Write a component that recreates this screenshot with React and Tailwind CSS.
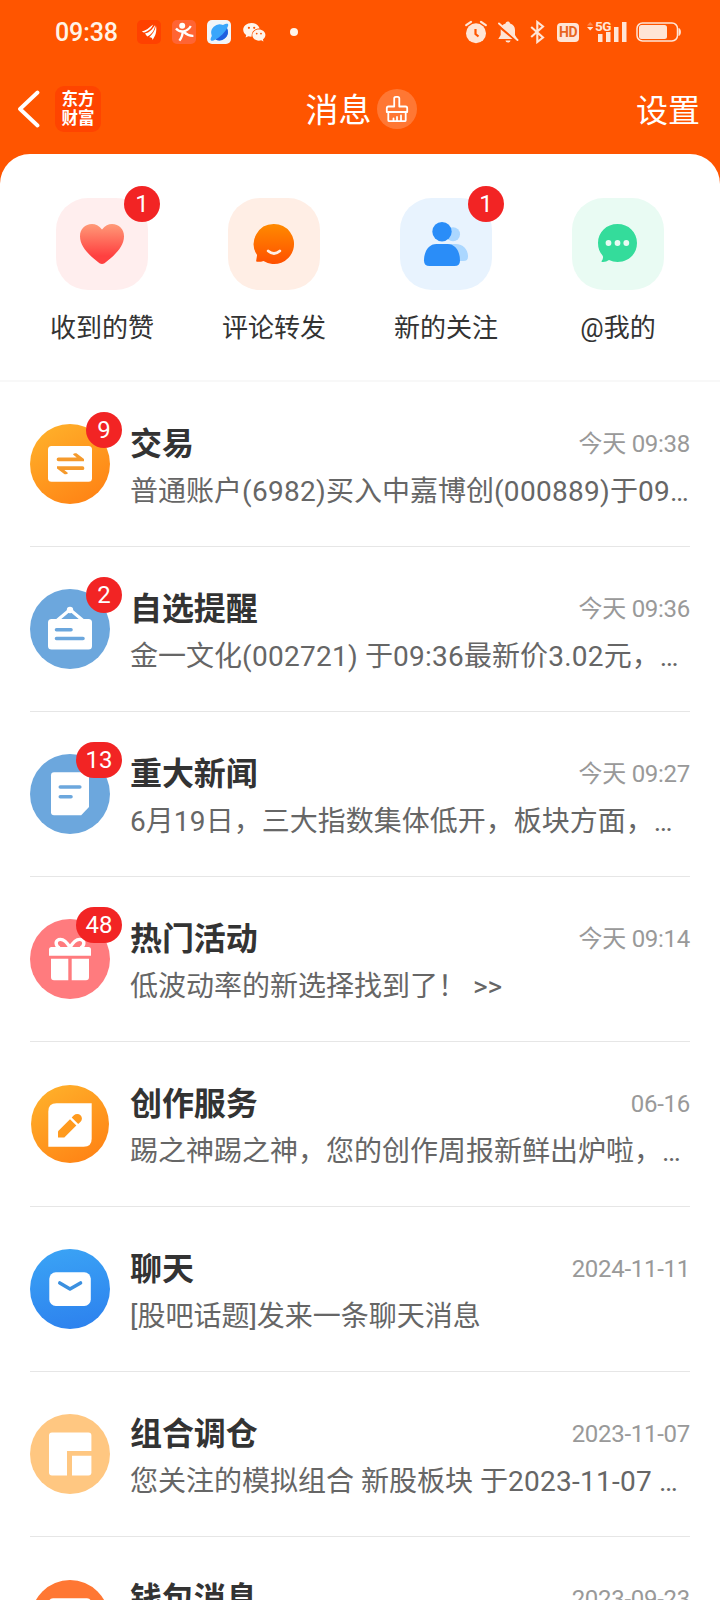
import React from "react";

const fontStack =
  "font-[Roboto,'Noto_Sans_CJK_SC',sans-serif] [font-kerning:none]";

/* ---------- status bar ---------- */

function AppIcons() {
  return (
    <div className="ml-[19px] flex items-center gap-[11px]">
      <svg width="24" height="24" viewBox="0 0 24 24">
        <rect width="24" height="24" rx="5" fill="#ff4100" />
        <path
          d="M4.8 11.4C9 10.6 12 7.6 16.2 4.4 14.6 8.6 10.6 11.8 6.8 12.4zM8 13.6c4.600-1 7.200-4.200 10.200-8.600C17.400 10.800 14.400 14.600 10.200 16.600zM12.200 17.200c3-2.400 5.600-6 6.800-11.400 1 5.200-.4 10.400-3.600 14.200.2-2.200-1-3-3.200-2.800z"
          fill="#fff"
        />
      </svg>
      <svg width="24" height="24" viewBox="0 0 24 24">
        <rect width="24" height="24" rx="5" fill="#ff6433" />
        <circle cx="10.200" cy="5.800" r="3" fill="#fff" />
        <path
          d="M4 8.500c2 2.400 4.600 3.300 7.400 2.900 3.200-.5 5.400-2 7.400-5.400M10.600 11.500c.2 3.200-.8 5.800-3.200 9.200M12 12.200c2.600 2.400 5.400 3.800 9.400 3.600"
          fill="none"
          stroke="#fff"
          strokeWidth="2.300"
        />
      </svg>
      <svg width="24" height="24" viewBox="0 0 24 24">
        <rect width="24" height="24" rx="5" fill="#f2f5f8" />
        <path
          d="M4 20.500c-1-1 0-3 .8-4.500A8.500 8.500 0 0 1 16 5c2-1.200 4.500-1.800 5-1 .6 1-.2 2.800-1 4.200A8.500 8.500 0 0 1 8.500 19.500C6.600 20.700 4.700 21.200 4 20.500z"
          fill="#3aa6fb"
        />
        <path
          d="M20 8.200c-2 4-6.500 8.600-11.500 11.300A8.600 8.600 0 0 0 20.700 10z"
          fill="#1f5fe0"
        />
      </svg>
      <svg width="24" height="24" viewBox="0 0 24 24" fill="#fff5ec">
        <path d="M9.500 3C4.800 3 1.200 6 1.200 9.800c0 2.200 1.200 4.100 3 5.300L3.600 17.600l2.800-1.400c1 .3 2.100.5 3.300.4C9 11.600 13 8.500 17.600 8.600 16.800 5.300 13.500 3 9.500 3z" />
        <circle cx="6.900" cy="7.800" r="1.100" fill="#ff5500" />
        <circle cx="12.200" cy="7.800" r="1.100" fill="#ff5500" />
        <path d="M16.900 9.600c-3.700 0-6.600 2.400-6.600 5.500s2.900 5.600 6.600 5.600c.8 0 1.600-.1 2.300-.4l2.300 1.200-.6-2c1.500-1 2.500-2.600 2.500-4.400 0-3.100-2.900-5.500-6.500-5.500z" />
        <circle cx="14.700" cy="13.600" r=".9" fill="#ff5500" />
        <circle cx="19" cy="13.600" r=".9" fill="#ff5500" />
      </svg>
    </div>
  );
}

function SystemIcons() {
  return (
    <div className="mr-[38px] ml-auto flex items-center text-[#ffe5d6]">
      {/* alarm */}
      <svg width="22" height="24" viewBox="0 0 22 24">
        <circle cx="11" cy="13.300" r="10" fill="currentColor" />
        <path
          d="M1.200 5.200 6 1.800M20.800 5.200 16 1.800"
          stroke="currentColor"
          strokeWidth="2.200"
          strokeLinecap="round"
        />
        <path
          d="M10.500 9v5l3 2.500"
          fill="none"
          stroke="#ff5500"
          strokeWidth="2.200"
        />
      </svg>
      {/* muted bell */}
      <svg className="ml-[10px]" width="22" height="24" viewBox="0 0 22 24">
        <path
          d="M8.500 3.500c.3-1.300 1.200-2 2.300-2s2 .7 2.300 2c3.300 1 4.900 3.500 4.900 6.500v5l2.300 4H1.300l2.400-4v-5c0-3 1.500-5.500 4.800-6.500z"
          fill="currentColor"
        />
        <path d="M8.500 20.500h5a2.500 2 0 0 1-5 0z" fill="currentColor" />
        <path d="M1 5.500 21 22" stroke="#ff5500" strokeWidth="2.400" />
        <path
          d="M2 3.500 20.500 20"
          stroke="currentColor"
          strokeWidth="1.900"
          strokeLinecap="round"
        />
      </svg>
      {/* bluetooth */}
      <svg className="ml-[11px]" width="15" height="24" viewBox="0 0 15 24">
        <path
          d="M1.200 7 13 17.500 7.300 22V2L13 6.500 1.200 17"
          fill="none"
          stroke="currentColor"
          strokeWidth="2.100"
        />
      </svg>
      <div className="ml-[12px] flex h-[19px] w-[22px] items-center justify-center rounded-[4px] bg-[#ffe5d6] font-['Roboto'] text-[14px] leading-none font-bold tracking-[-0.5px] text-[#e8651f]">
        HD
      </div>
      <div className="relative ml-[7px] h-6 w-[42px]">
        <svg width="42" height="24" viewBox="0 0 42 24" fill="currentColor">
          <path d="M1 5.500 4.200 2l3.200 3.500z" opacity=".35" />
          <path d="M1 7h6.400L4.200 10.500z" />
          <rect x="12" y="14" width="4.500" height="8" />
          <rect x="20" y="12" width="4.500" height="10" />
          <rect x="28" y="7" width="4.500" height="15" />
          <rect x="36" y="2" width="4.500" height="20" />
        </svg>
        <span className="absolute top-0 left-[9px] font-['Roboto'] text-[13.500px] leading-[12px] font-bold tracking-[-0.5px]">
          5G
        </span>
      </div>
      {/* battery */}
      <svg className="ml-[8px]" width="46" height="24" viewBox="0 0 46 24">
        <rect
          x="1"
          y="3"
          width="40.500"
          height="18"
          rx="5.500"
          fill="none"
          stroke="currentColor"
          strokeWidth="1.500"
        />
        <rect x="3" y="5" width="28" height="14" rx="2.500" fill="currentColor" />
        <path
          d="M43 8.500c1.800.6 1.800 6.400 0 7z"
          fill="currentColor"
          stroke="currentColor"
        />
      </svg>
    </div>
  );
}

function StatusBar() {
  return (
    <div className="flex h-16 items-center pl-[55px]">
      <span className="w-[63px] pt-px text-[25px] leading-8 font-medium tracking-[-0.1px] text-[#fff3e8]">
        09:38
      </span>
      <AppIcons />
      <span className="ml-6 h-2 w-2 rounded-full bg-[#fff5ec]" />
      <SystemIcons />
    </div>
  );
}

function NavBar() {
  return (
    <div className="grid h-[90px] grid-cols-[1fr_auto_1fr] items-center pr-5 pl-[17px]">
      <div className="flex items-center">
        <svg width="23" height="38" viewBox="0 0 23 38">
          <path
            d="M20.500 2.500 3 19l17.500 16.500"
            fill="none"
            stroke="#fff"
            strokeWidth="3.800"
            strokeLinecap="round"
            strokeLinejoin="round"
          />
        </svg>
        <div className="ml-[15px] flex h-[46px] w-[46px] flex-col items-center justify-center rounded-[9px] bg-[#ff4400] text-[16.500px] leading-[19px] font-bold text-white">
          <span>东方</span>
          <span>财富</span>
        </div>
      </div>
      <div className="flex items-center gap-[5px] pl-[5px]">
        <h1 className="pt-[3px] text-[33px] leading-10 text-white">消息</h1>
        <span className="flex h-10 w-10 items-center justify-center rounded-full bg-[#ff7733]">
          <svg
            width="24"
            height="28"
            viewBox="0 0 24 28"
            fill="none"
            stroke="#fff"
            strokeWidth="1.800"
            strokeLinejoin="round"
            strokeLinecap="round"
          >
            <path d="M9.200 11.500V3.500Q9.200 1.800 10.900 1.800h1.700Q14.300 1.800 14.300 3.500v8h6.200q1.700 0 1.700 1.700V17H1.800v-3.800q0-1.700 1.700-1.700z" />
            <path d="M3.300 17v8.200q0 1 1 1h15.400q1 0 1-1V17M8.500 26v-2.500M12 26v-4M16 26v-5.500" />
          </svg>
        </span>
      </div>
      <span className="justify-self-end pt-[3px] text-[32px] leading-10 text-white">
        设置
      </span>
    </div>
  );
}

/* ---------- shortcuts ---------- */

const HeartIcon = (
  <svg width="92" height="92" viewBox="0 0 92 92">
    <defs>
      <linearGradient id="heart" x1="0" y1="0" x2="0" y2="1">
        <stop offset="0" stopColor="#ff9a78" />
        <stop offset=".8" stopColor="#ff4040" />
      </linearGradient>
    </defs>
    <path
      d="M46 31.500C43 27.500 39.500 26 36 26c-7 0-12 5-12 12.200C24 49 34 58 43.500 65.200q2.500 1.600 5 0C58 58 68 49 68 38.200 68 31 63 26 56 26c-3.500 0-7 1.500-10 5.500z"
      fill="url(#heart)"
    />
  </svg>
);

const CommentIcon = (
  <svg width="92" height="92" viewBox="0 0 92 92">
    <defs>
      <linearGradient id="comment" x1="0" y1="0" x2="0" y2="1">
        <stop offset="0" stopColor="#ff8a00" />
        <stop offset="1" stopColor="#ff5000" />
      </linearGradient>
    </defs>
    <path
      d="M46 26a20 20 0 1 1-10.500 37c-2 .8-4.500 1-6.500.8q-1-.2-.8-1.200l.9-5.500A20 20 0 0 1 46 26z"
      fill="url(#comment)"
    />
    <path
      d="M40.200 53q5.800 5 11.600 0"
      fill="none"
      stroke="#ffeee4"
      strokeWidth="2.800"
      strokeLinecap="round"
    />
  </svg>
);

const FollowIcon = (
  <svg width="92" height="92" viewBox="0 0 92 92">
    <g fill="#abd7ff">
      <circle cx="53" cy="36.300" r="7" />
      <path d="M46 46h10c7 0 12 5.500 12 12.500q0 4.500-4.500 4.500H46z" />
    </g>
    <g fill="#2a8df8">
      <circle cx="42" cy="33.700" r="9.700" />
      <path d="M36.500 46h11C55 46 60 53 60 62.500q0 5.500-5.500 5.500h-25Q24 68 24 62.500C24 53 29 46 36.500 46z" />
    </g>
  </svg>
);

const MentionIcon = (
  <svg width="92" height="92" viewBox="0 0 92 92">
    <path
      d="M45.500 26C56.500 26 65 34 65 45s-8.500 19-19.500 19q-4.500 0-8.500-2-3 2.300-6.800 2-1.200-.3-.4-1.200 1.700-2 1-5C27.500 54.500 26 50 26 45c0-11 8.500-19 19.500-19z"
      fill="#34dc9b"
    />
    <g fill="#e9fbf3">
      <circle cx="36.500" cy="45" r="2.900" />
      <circle cx="45.500" cy="45" r="2.900" />
      <circle cx="54.300" cy="45" r="2.900" />
    </g>
  </svg>
);

const shortcuts = [
  { title: "收到的赞", count: 1, bg: "bg-[#ffeeee]", icon: HeartIcon },
  { title: "评论转发", bg: "bg-[#ffeee5]", icon: CommentIcon },
  { title: "新的关注", count: 1, bg: "bg-[#e8f3fe]", icon: FollowIcon },
  { title: "@我的", bg: "bg-[#e9fbf3]", icon: MentionIcon },
];

function Badge({ count }) {
  return (
    <span className="absolute -top-3 -right-3 flex h-9 min-w-9 items-center justify-center rounded-full bg-[#f22424] px-[9.500px] text-[24px] leading-9 text-white">
      {count}
    </span>
  );
}

function Shortcuts() {
  return (
    <div className="grid h-[228px] grid-cols-4 border-b-2 border-[#f8f8f8] px-4 pt-11">
      {shortcuts.map((s) => (
        <div key={s.title} className="flex flex-col items-center">
          <div className={`relative h-[92px] w-[92px] rounded-[32px] ${s.bg}`}>
            {s.icon}
            {s.count && <Badge count={s.count} />}
          </div>
          <span className="mt-5 text-[26px] leading-9 text-[#333]">
            {s.title}
          </span>
        </div>
      ))}
    </div>
  );
}

/* ---------- message list ---------- */

const TradeIcon = (
  <svg width="80" height="80" viewBox="0 0 80 80">
    <defs>
      <linearGradient id="orange" x1="0.200" y1="0" x2="0.800" y2="1">
        <stop offset="0" stopColor="#ffb02a" />
        <stop offset="1" stopColor="#ff8214" />
      </linearGradient>
    </defs>
    <circle cx="40" cy="40" r="40" fill="url(#orange)" />
    <rect x="18" y="22" width="44" height="35.700" rx="3.500" fill="#fff" />
    <path
      d="M28.500 33.500h18.200L43 30.600q.8-1.800 3.400-1.300L54 35v2.200H28.500a1.850 1.850 0 0 1 0-3.700zM52.500 46H34.300l3.700 2.900q-.8 1.800-3.400 1.300L27 44.500v-2.200h25.500a1.850 1.850 0 0 1 0 3.700z"
      fill="#f59a2c"
    />
  </svg>
);

const AlertIcon = (
  <svg width="80" height="80" viewBox="0 0 80 80">
    <circle cx="40" cy="40" r="40" fill="#6ca7dd" />
    <path
      d="M27 31.500 40 20.500l13 11"
      fill="none"
      stroke="#fff"
      strokeWidth="3.200"
    />
    <circle cx="40" cy="21" r="3.200" fill="#fff" />
    <rect x="18" y="30" width="44" height="30.500" rx="3.500" fill="#fff" />
    <path
      d="M26.500 40.700h14.500M26.500 49.500h26.500"
      stroke="#6ca7dd"
      strokeWidth="3.600"
      strokeLinecap="round"
    />
  </svg>
);

const NewsIcon = (
  <svg width="80" height="80" viewBox="0 0 80 80">
    <circle cx="40" cy="40" r="40" fill="#6ca7dd" />
    <path
      d="M24 18.300h32q3 0 3 3V53l-7.800 8.300H24q-3 0-3-3v-37q0-3 3-3z"
      fill="#fff"
    />
    <path
      d="M30.300 33h19.500M30.300 42.700H41"
      stroke="#6ca7dd"
      strokeWidth="3.600"
      strokeLinecap="round"
    />
  </svg>
);

const GiftIcon = (
  <svg width="80" height="80" viewBox="0 0 80 80">
    <circle cx="40" cy="40" r="40" fill="#ff7b7e" />
    <path
      d="M40 28.500C36.500 22.500 32 19.500 28.500 20.700c-3.500 1.500-3 6.300 1 8.300M40 28.500C43.500 22.500 48 19.500 51.500 20.700c3.500 1.500 3 6.300-1 8.300"
      fill="none"
      stroke="#fff"
      strokeWidth="3.400"
    />
    <path
      d="M21.500 28h37q2.500 0 2.500 2.500v6.200H19v-6.200q0-2.500 2.500-2.500z"
      fill="#fff"
    />
    <path
      d="M21 39.700h17.300v21.600H24q-3 0-3-3zM41.700 39.700H59v18.600q0 3-3 3H41.700z"
      fill="#fff"
    />
  </svg>
);

const CreateIcon = (
  <svg width="80" height="80" viewBox="0 0 80 80">
    <circle cx="40" cy="40" r="39" fill="url(#orange)" />
    <path
      d="M26.500 19.300h35.200v35.400q0 8-8 8H18.300V27.500q0-8.200 8.200-8.200z"
      fill="#fff"
    />
    <path d="M28 47.200 40 35.200l6.300 6.200-12 12H28z" fill="#ff9a1e" />
    <path
      d="m41.700 33.500 2.200-2.200a4.600 4.600 0 0 1 6.700 6.500L48.200 40z"
      fill="#ff9a1e"
    />
  </svg>
);

const ChatIcon = (
  <svg width="80" height="80" viewBox="0 0 80 80">
    <defs>
      <linearGradient id="blue" x1="0.400" y1="0" x2="0.600" y2="1">
        <stop offset="0" stopColor="#3aa2f5" />
        <stop offset="1" stopColor="#2d82ee" />
      </linearGradient>
    </defs>
    <circle cx="40" cy="40" r="40" fill="url(#blue)" />
    <rect x="19.300" y="23.300" width="41.500" height="33.700" rx="6.500" fill="#fff" />
    <path
      d="m29.800 34 10.200 6 10.500-6"
      fill="none"
      stroke="#3b90e0"
      strokeWidth="3.600"
      strokeLinecap="round"
      strokeLinejoin="round"
    />
  </svg>
);

const PortfolioIcon = (
  <svg width="80" height="80" viewBox="0 0 80 80">
    <circle cx="40" cy="40" r="40" fill="#ffc781" />
    <path
      d="M22 18.600h36.400q3 0 3 3V37H37v24.400H22q-3 0-3-3V21.600q0-3 3-3z"
      fill="#fff"
    />
    <path d="M42 41.800h19.400v16.600q0 3-3 3H42z" fill="#fff" />
  </svg>
);

const WalletIcon = (
  <svg width="80" height="80" viewBox="0 0 80 80">
    <circle cx="40" cy="40" r="39" fill="#ff7733" />
    <rect x="19" y="19.300" width="42" height="42" rx="4" fill="#fff" />
  </svg>
);

const messages = [
  {
    title: "交易",
    time: "今天 09:38",
    text: "普通账户(6982)买入中嘉博创(000889)于09…",
    count: 9,
    icon: TradeIcon,
  },
  {
    title: "自选提醒",
    time: "今天 09:36",
    text: "金一文化(002721) 于09:36最新价3.02元，…",
    count: 2,
    icon: AlertIcon,
  },
  {
    title: "重大新闻",
    time: "今天 09:27",
    text: "6月19日，三大指数集体低开，板块方面，…",
    count: 13,
    icon: NewsIcon,
  },
  {
    title: "热门活动",
    time: "今天 09:14",
    text: "低波动率的新选择找到了！ >>",
    count: 48,
    icon: GiftIcon,
  },
  {
    title: "创作服务",
    time: "06-16",
    text: "踢之神踢之神，您的创作周报新鲜出炉啦，…",
    icon: CreateIcon,
  },
  {
    title: "聊天",
    time: "2024-11-11",
    text: "[股吧话题]发来一条聊天消息",
    icon: ChatIcon,
  },
  {
    title: "组合调仓",
    time: "2023-11-07",
    text: "您关注的模拟组合 新股板块 于2023-11-07 …",
    icon: PortfolioIcon,
  },
  {
    title: "钱包消息",
    time: "2023-09-23",
    text: "",
    icon: WalletIcon,
  },
];

// digits get a little more room than the chinese text around them
function MixedText({ text }) {
  return text.split(/([\d:.()-]{2,})/).map((part, i) =>
    i % 2 ? (
      <span key={i} className="tracking-[0.28px]">
        {part}
      </span>
    ) : (
      part
    )
  );
}

function MessageRow({ title, time, text, count, icon }) {
  return (
    <li className="flex h-[165px] shrink-0 border-b border-[#e6e6e6] pt-[42px]">
      <div className="relative h-20 w-20 shrink-0">
        {icon}
        {count && <Badge count={count} />}
      </div>
      <div className="ml-5 min-w-0 flex-1">
        <div className="flex h-10 items-center justify-between">
          <h2 className="text-[32px] leading-10 font-bold tracking-[-0.1px] text-[#333]">
            {title}
          </h2>
          <span className="text-[24px] leading-10 tracking-[-0.28px] text-[#999]">
            {time}
          </span>
        </div>
        <p className="mt-2 text-[28px] leading-10 whitespace-nowrap text-[#666]">
          <MixedText text={text} />
        </p>
      </div>
    </li>
  );
}

function App() {
  return (
    <div
      className={`flex h-[1600px] w-[720px] flex-col overflow-hidden bg-[#ff5500] ${fontStack}`}
    >
      <StatusBar />
      <NavBar />
      <main className="min-h-0 flex-1 overflow-hidden rounded-t-[30px] bg-white">
        <Shortcuts />
        <ul className="flex flex-col px-[30px]">
          {messages.map((m) => (
            <MessageRow key={m.title} {...m} />
          ))}
        </ul>
      </main>
    </div>
  );
}

export default App;
